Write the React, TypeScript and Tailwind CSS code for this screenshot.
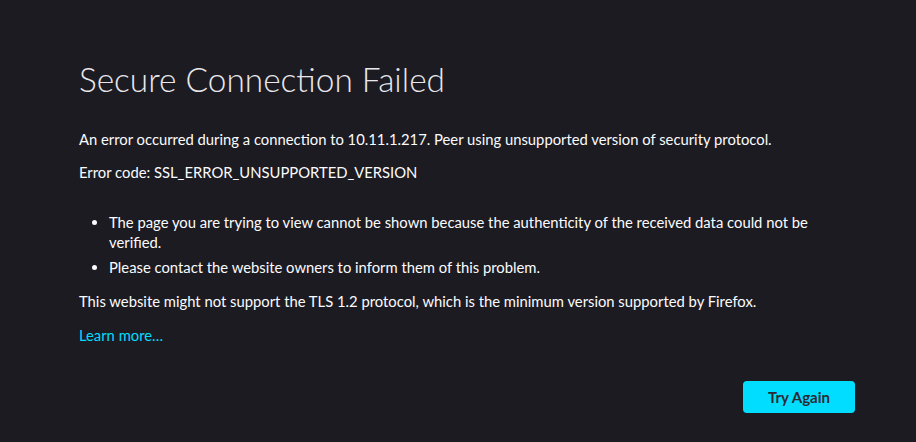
const items = [
  "The page you are trying to view cannot be shown because the authenticity of the received data could not be verified.",
  "Please contact the website owners to inform them of this problem.",
]

export default function App() {
  return (
    <div className="min-h-[442px] w-full bg-[#1c1b22] text-[#fbfbfe] font-['Lato',sans-serif]">
      <div className="ml-[79px] w-[780px] pt-[59px]">
        <h1 className="text-[33.4px] leading-[40px] font-light text-[#e8e8ec]">Secure Connection Failed</h1>

        <div className="mt-[30px] text-[14.8px] leading-[20px]">
          <p>An error occurred during a connection to 10.11.1.217. Peer using unsupported version of security protocol.</p>
          <p className="mt-[13px]">Error code: SSL_ERROR_UNSUPPORTED_VERSION</p>

          <ul className="mt-[30px] list-disc pl-[30px] flex flex-col gap-[5px]">
            {items.map((item) => (
              <li key={item}>{item}</li>
            ))}
          </ul>

          <p className="mt-[14px]">This website might not support the TLS 1.2 protocol, which is the minimum version supported by Firefox.</p>
          <p className="mt-[14px]">
            <a href="#" className="text-[#00ddff]">Learn more…</a>
          </p>
        </div>

        <div className="mt-[36px] flex justify-end">
          <button className="mr-[4px] h-[32px] w-[112px] rounded-[4px] bg-[#00ddff] text-[15px] font-bold text-[#2b2a33]">
            Try Again
          </button>
        </div>
      </div>
    </div>
  )
}
